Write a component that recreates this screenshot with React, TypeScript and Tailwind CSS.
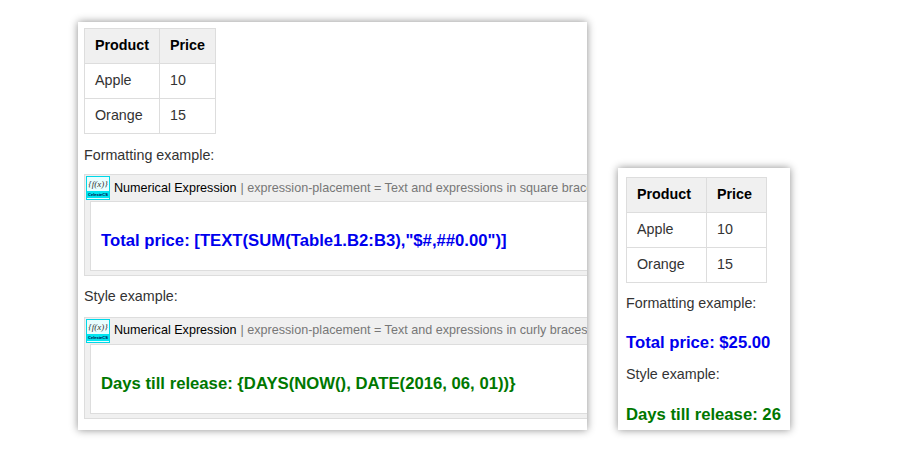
import React from "react";

const F = { fontFamily: '"Liberation Sans", Arial, sans-serif' };

function Table({ w1, w2 }: { w1: string; w2: string }) {
  const th = "border border-[#dddddd] bg-[#f0f0f0] px-[10px] h-[35px] text-left font-bold text-[14.3px] text-black";
  const td = "border border-[#dddddd] px-[10px] h-[35px] text-[14.3px] text-[#333]";
  return (
    <table className="border-collapse">
      <tbody>
        <tr><th className={th + " " + w1}>Product</th><th className={th + " " + w2}>Price</th></tr>
        <tr><td className={td}>Apple</td><td className={td}>10</td></tr>
        <tr><td className={td}>Orange</td><td className={td}>15</td></tr>
      </tbody>
    </table>
  );
}

function Icon() {
  return (
    <div className="w-[24px] h-[24px] border border-[#00d8e8] bg-[#e8feff] flex flex-col items-center shrink-0">
      <span className="text-[9px] leading-[14px] italic text-[#333]" style={{ fontFamily: '"Liberation Serif", serif' }}>{"{f(x)}"}</span>
      <span className="w-full bg-[#00e5f0] text-[4px] leading-[7px] text-[#004] text-center font-bold">CelesteCS</span>
    </div>
  );
}

function Widget({ text, color, placement }: { text: string; color: string; placement: string }) {
  return (
    <div className="border border-[#dddddd] bg-[#f0f0f0] pb-[4px] overflow-hidden whitespace-nowrap">
      <div className="flex items-center h-[26px] pl-[1px] gap-[4px] text-[12.6px]">
        <Icon />
        <span className="text-black">Numerical Expression</span>
        <span className="text-[#777]">| expression-placement = {placement}</span>
      </div>
      <div className={"ml-[5px] border border-[#dddddd] bg-white h-[70px] flex items-end pb-[17px] pl-[10px] text-[16.7px] font-bold " + color}>
        {text}
      </div>
    </div>
  );
}

export default function App() {
  return (
    <div className="w-[920px] h-[450px] bg-white relative" style={F}>
      <div className="absolute left-[78px] top-[22px] w-[509px] h-[408px] bg-white shadow-[0_0_8px_rgba(0,0,0,0.45)] overflow-hidden pl-[6px] pt-[6px]">
        <Table w1="w-[75px]" w2="w-[55px]" />
        <div className="text-[14.3px] text-[#333] mt-[11px] mb-[8px]">Formatting example:</div>
        <div className="w-[520px]">
          <Widget text={'Total price: [TEXT(SUM(Table1.B2:B3),"$#,##0.00")]'} color="text-[#0000ee]" placement="Text and expressions in square braces" />
        </div>
        <div className="text-[14.3px] text-[#333] mt-[10px] mb-[9px]">Style example:</div>
        <div className="w-[520px]">
          <Widget text="Days till release: {DAYS(NOW(), DATE(2016, 06, 01))}" color="text-[#007700]" placement="Text and expressions in curly braces" />
        </div>
      </div>
      <div className="absolute left-[618px] top-[168px] w-[172px] h-[262px] bg-white shadow-[0_0_8px_rgba(0,0,0,0.45)] pl-[8px] pt-[9px] whitespace-nowrap">
        <Table w1="w-[80px]" w2="w-[60px]" />
        <div className="text-[14.3px] text-[#333] mt-[10px]">Formatting example:</div>
        <div className="text-[16.7px] font-bold text-[#0000ee] mt-[16px]">Total price: $25.00</div>
        <div className="text-[14.3px] text-[#333] mt-[9px]">Style example:</div>
        <div className="text-[16.7px] font-bold text-[#007700] mt-[16px]">Days till release: 26</div>
      </div>
    </div>
  );
}
